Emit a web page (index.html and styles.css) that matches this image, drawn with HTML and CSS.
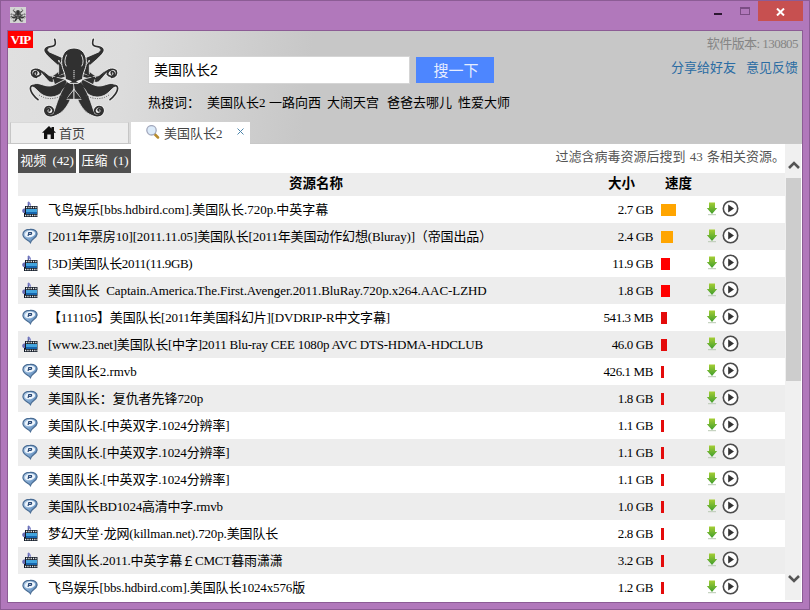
FILE: index.html
```html
<!DOCTYPE html>
<html lang="zh-CN">
<head>
<meta charset="utf-8">
<title>美国队长2</title>
<link rel="stylesheet" href="styles.css">
</head>
<body>
<svg class="defs" width="0" height="0">
  <defs>
    <linearGradient id="green" x1="0" y1="0" x2="0" y2="1"><stop offset="0" stop-color="#a5ce35"/><stop offset="1" stop-color="#3f9d2c"/></linearGradient>
    <linearGradient id="blue" x1="0" y1="0" x2="1" y2="1"><stop offset="0" stop-color="#c4dcf2"/><stop offset="1" stop-color="#4d7fb6"/></linearGradient>
    <g id="arms">
      <path d="M164 118C171 139 160 139 145 141C127 147 138 160 151 168L196 208"/>
      <path d="M109 222C114 214 104 212 101 220C101 231 116 232 122 223C120 208 105 204 96 212C91 222 98 232 110 232"/>
      <path d="M112 209C136 213 135 242 158 236C176 230 178 218 199 214"/>
      <path d="M114 299C89 278 86 258 98 257C112 256 123 281 152 281C183 280 189 258 213 241"/>
      <path d="M147 333C154 329 147 323 141 328C136 337 148 346 158 338C164 326 151 316 139 322C129 333 138 347 153 347C180 345 196 302 218 250"/>
    </g>
    <g id="limbs">
      <path d="M133 150C138 142 146 141 152 142C142 147 142 151 148 156L208 182L194 216C172 190 134 168 133 150Z"/>
      <path d="M122 211C141 214 145 235 160 226C173 219 180 206 205 198L211 234C180 225 176 248 154 247C137 245 139 222 122 211Z"/>
      <path d="M93 258C113 240 126 260 151 258C177 254 187 232 214 228L226 248C195 261 186 290 153 291C118 291 112 262 93 258Z"/>
      <path d="M156 347C168 327 172 288 202 246L224 248C220 294 192 349 156 347Z"/>
      <path d="M156 228L196 238L164 254Z"/>
      <path d="M176 180V226L198 219Z"/>
      <path d="M222 268L198 298H222Z"/>
    </g>
    <g id="octopus">
      <g fill="none" stroke="#eee" stroke-width="10" stroke-linecap="round">
        <use href="#arms"/><use href="#arms" transform="matrix(-1 0 0 1 444 0)"/>
      </g>
      <g fill="#303030" stroke="#eee" stroke-width="2.4">
        <use href="#limbs"/><use href="#limbs" transform="matrix(-1 0 0 1 444 0)"/>
      </g>
      <g fill="none" stroke="#303030" stroke-width="5" stroke-linecap="round">
        <use href="#arms"/><use href="#arms" transform="matrix(-1 0 0 1 444 0)"/>
      </g>
      <path d="M222 144C196 144 183 166 185 190C187 210 196 216 196 239L210 250H234L248 239C248 216 257 210 259 190C261 166 248 144 222 144Z" fill="#303030" stroke="#eee" stroke-width="3"/>
      <path d="M200 164Q190 184 199 199M244 164Q254 184 245 199" fill="none" stroke="#ddd" stroke-width="3"/>
      <path d="M196 236L216 244L207 250L198 244ZM248 236L228 244L237 250L246 244Z" fill="#eee"/>
      <path d="M222 211V236" stroke="#aaa" stroke-width="6" stroke-dasharray="3 3"/>
      <path d="M117 285Q148 306 188 286M327 285Q296 306 256 286" fill="none" stroke="#555" stroke-width="3" stroke-dasharray="3 4"/>
    </g>
    <symbol id="film" viewBox="0 0 16 16">
      <path d="M6.4 1V10" stroke="#5960aa" stroke-width="1.4"/><path d="M6.4 0Q10 3 8.8 6Q8.8 4 6.4 3Z" fill="#8085c8"/><ellipse cx="3.5" cy="9.8" rx="3.3" ry="2.5" fill="#666cb5"/>
      <path d="M3 5H15.5V16H2V12H3Z" fill="#111a26"/><path d="M4 8H15V13H4Z" fill="#42a4dd"/><path d="M4 11H15V13H4Z" fill="#1665ad"/>
      <path d="M4 6.5H15.5M3 14.5H15.5" stroke="#eee" stroke-width="1.3" stroke-dasharray="1.3 1"/>
    </symbol>
    <symbol id="bubble" viewBox="0 0 17 16">
      <path d="M8.5 1C13 .5 16.3 3 16 6C15.7 10 9.5 11 9 15C6.5 12 1 11 1 6.5C1 3 4 1 8.5 1Z" fill="url(#blue)" stroke="#496c94" stroke-width="1.3"/>
      <ellipse cx="8.5" cy="5.9" rx="5.5" ry="3.4" fill="#eef5fc" transform="rotate(-10 8.5 6)"/><path d="M6.5 8L7.2 4.5H10Q10.7 6 9 6.4H7" fill="none" stroke="#294978" stroke-width="1.3"/>
    </symbol>
    <symbol id="down" viewBox="0 0 12 14">
      <path d="M3 .5H9V6H11.2L6 12L.8 6H3Z" fill="url(#green)"/><path d="M2 12.7H10" stroke="#b9c9b3"/>
    </symbol>
    <symbol id="play" viewBox="0 0 17 17">
      <circle cx="8.5" cy="8.5" r="7.2" fill="#fff" stroke="#4b4b4b" stroke-width="1.6"/><path d="M6.2 4.5L12 8.5L6.2 12.5Z" fill="#333"/>
    </symbol>
  </defs>
</svg>
<div class="window">
  <div class="titlebar">
    <svg class="app-icon" width="16" height="16" viewBox="84 108 276 246"><use href="#octopus"/></svg>
    <div class="controls">
      <i class="minimize"></i><i class="maximize"></i>
      <div class="close"><svg width="9" height="8" viewBox="0 0 9 8"><path d="M1 .5L8 7.5M8 .5L1 7.5" stroke="#fff" stroke-width="2"/></svg></div>
    </div>
  </div>
  <div class="client">
    <header>
      <div class="top">
        <span class="vip">VIP</span>
        <svg class="logo" width="92" height="82" viewBox="84 108 276 246"><use href="#octopus"/></svg>
        <div class="search">
          <div class="search-row"><div class="field">美国队长2</div><div class="go">搜一下</div></div>
          <div class="hot"><span class="hot-label">热搜词：</span><span class="h1">美国队长2</span><span class="h2">一路向西</span><span class="h3">大闹天宫</span><span class="h4">爸爸去哪儿</span><span>性爱大师</span></div>
        </div>
        <div class="about"><div class="version">软件版本: 130805</div><div class="links"><span>分享给好友</span><span>意见反馈</span></div></div>
      </div>
      <div class="tabs">
        <div class="tab home"><svg width="14" height="13" viewBox="0 0 14 13"><path d="M7 0L9.5 2.4V1H12V4.8L14 6.8H12V13H8.7V8.5H5.3V13H2V6.8H0Z" fill="#111"/></svg><span>首页</span></div>
        <div class="tab active"><svg width="14" height="14" viewBox="0 0 14 14"><path d="M8.5 9L12 12.5" stroke="#b78b2c" stroke-width="2.5" stroke-linecap="round"/><circle cx="5.5" cy="5.3" r="4.7" fill="#dcebfa" stroke="#a3a9bd" stroke-width="1.3"/></svg><span>美国队长2</span><svg class="tab-close" width="7" height="7" viewBox="0 0 7 7"><path d="M.5 .5L6.5 6.5M6.5 .5L.5 6.5" stroke="#4f86ab"/></svg></div>
      </div>
    </header>
    <main>
      <div class="results">
        <div class="filters"><span class="chip video">视频&nbsp; (42)</span><span class="chip zip">压缩&nbsp; (1)</span><span class="count">过滤含病毒资源后搜到 <b>43</b> 条相关资源。</span></div>
        <div class="row head"><span class="name">资源名称</span><span class="size">大小</span><span class="speed">速度</span></div>
        <div class="row"><svg class="kind"><use href="#film"/></svg><span class="name t0">飞鸟娱乐[bbs.hdbird.com].美国队长.720p.中英字幕</span><span class="size">2.7 GB</span><span class="speed"><i class="bar orange" style="width:15px"></i></span><svg class="down"><use href="#down"/></svg><svg class="play"><use href="#play"/></svg></div>
        <div class="row"><svg class="kind"><use href="#bubble"/></svg><span class="name t2">[2011年票房10][2011.11.05]美国队长[2011年美国动作幻想(Bluray)]（帝国出品）</span><span class="size">2.4 GB</span><span class="speed"><i class="bar orange" style="width:12px"></i></span><svg class="down"><use href="#down"/></svg><svg class="play"><use href="#play"/></svg></div>
        <div class="row"><svg class="kind"><use href="#film"/></svg><span class="name t4">[3D]美国队长2011(11.9GB)</span><span class="size">11.9 GB</span><span class="speed"><i class="bar red" style="width:9px"></i></span><svg class="down"><use href="#down"/></svg><svg class="play"><use href="#play"/></svg></div>
        <div class="row"><svg class="kind"><use href="#film"/></svg><span class="name t1">美国队长&nbsp; Captain.America.The.First.Avenger.2011.BluRay.720p.x264.AAC-LZHD</span><span class="size">1.8 GB</span><span class="speed"><i class="bar red" style="width:9px"></i></span><svg class="down"><use href="#down"/></svg><svg class="play"><use href="#play"/></svg></div>
        <div class="row"><svg class="kind"><use href="#bubble"/></svg><span class="name t3">【111105】美国队长[2011年美国科幻片][DVDRIP-R中文字幕]</span><span class="size">541.3 MB</span><span class="speed"><i class="bar" style="width:6px"></i></span><svg class="down"><use href="#down"/></svg><svg class="play"><use href="#play"/></svg></div>
        <div class="row"><svg class="kind"><use href="#film"/></svg><span class="name t3">[www.23.net]美国队长[中字]2011 Blu-ray CEE 1080p AVC DTS-HDMA-HDCLUB</span><span class="size">46.0 GB</span><span class="speed"><i class="bar" style="width:6px"></i></span><svg class="down"><use href="#down"/></svg><svg class="play"><use href="#play"/></svg></div>
        <div class="row"><svg class="kind"><use href="#bubble"/></svg><span class="name t1">美国队长2.rmvb</span><span class="size">426.1 MB</span><span class="speed"><i class="bar" style="width:3px"></i></span><svg class="down"><use href="#down"/></svg><svg class="play"><use href="#play"/></svg></div>
        <div class="row"><svg class="kind"><use href="#bubble"/></svg><span class="name t1">美国队长：复仇者先锋720p</span><span class="size">1.8 GB</span><span class="speed"><i class="bar" style="width:3px"></i></span><svg class="down"><use href="#down"/></svg><svg class="play"><use href="#play"/></svg></div>
        <div class="row"><svg class="kind"><use href="#bubble"/></svg><span class="name t2">美国队长.[中英双字.1024分辨率]</span><span class="size">1.1 GB</span><span class="speed"><i class="bar" style="width:3px"></i></span><svg class="down"><use href="#down"/></svg><svg class="play"><use href="#play"/></svg></div>
        <div class="row"><svg class="kind"><use href="#bubble"/></svg><span class="name t2">美国队长.[中英双字.1024分辨率]</span><span class="size">1.1 GB</span><span class="speed"><i class="bar" style="width:3px"></i></span><svg class="down"><use href="#down"/></svg><svg class="play"><use href="#play"/></svg></div>
        <div class="row"><svg class="kind"><use href="#bubble"/></svg><span class="name t2">美国队长.[中英双字.1024分辨率]</span><span class="size">1.1 GB</span><span class="speed"><i class="bar" style="width:3px"></i></span><svg class="down"><use href="#down"/></svg><svg class="play"><use href="#play"/></svg></div>
        <div class="row"><svg class="kind"><use href="#bubble"/></svg><span class="name t3">美国队长BD1024高清中字.rmvb</span><span class="size">1.0 GB</span><span class="speed"><i class="bar" style="width:3px"></i></span><svg class="down"><use href="#down"/></svg><svg class="play"><use href="#play"/></svg></div>
        <div class="row"><svg class="kind"><use href="#film"/></svg><span class="name t2">梦幻天堂·龙网(killman.net).720p.美国队长</span><span class="size">2.8 GB</span><span class="speed"><i class="bar" style="width:3px"></i></span><svg class="down"><use href="#down"/></svg><svg class="play"><use href="#play"/></svg></div>
        <div class="row"><svg class="kind"><use href="#film"/></svg><span class="name t2">美国队长.2011.中英字幕￡CMCT暮雨潇潇</span><span class="size">3.2 GB</span><span class="speed"><i class="bar" style="width:3px"></i></span><svg class="down"><use href="#down"/></svg><svg class="play"><use href="#play"/></svg></div>
        <div class="row"><svg class="kind"><use href="#bubble"/></svg><span class="name t2">飞鸟娱乐[bbs.hdbird.com].美国队长1024x576版</span><span class="size">1.2 GB</span><span class="speed"><i class="bar" style="width:3px"></i></span><svg class="down"><use href="#down"/></svg><svg class="play"><use href="#play"/></svg></div>
      </div>
      <div class="scrollbar">
        <svg width="12" height="10" viewBox="0 0 12 10"><path d="M1 8L6 3L11 8" fill="none" stroke="#555" stroke-width="2.6"/></svg>
        <div class="thumb"></div>
        <svg class="scroll-down" width="12" height="10" viewBox="0 0 12 10"><path d="M1 2L6 7L11 2" fill="none" stroke="#555" stroke-width="2.6"/></svg>
      </div>
    </main>
  </div>
</div>
</body>
</html>
```
FILE: styles.css
```css
* { box-sizing: border-box; }
body { margin: 0; font-family: "Liberation Serif", "Noto Sans CJK SC", serif; font-size: 13px; color: #000; overflow: hidden; }
svg { display: block; flex: none; }
.defs { position: absolute; }
.window { width: 810px; height: 610px; background: #b178bb; border: 1px solid #8c5c95; padding: 0 6px 6px; display: flex; flex-direction: column; white-space: nowrap; }
.titlebar { height: 29px; flex: none; display: flex; justify-content: space-between; padding: 0 0 0 3px; }
.app-icon { margin-top: 6px; background: #d4d4d4; }
.controls { display: flex; }
.minimize { width: 8px; height: 2px; background: #2c1731; margin: 12px 18px 0 0; }
.maximize { width: 10px; height: 8px; border: 1px solid #7b4d84; border-top-width: 2px; margin: 6px 8px 0 0; }
.close { width: 45px; height: 20px; background: #c75050; display: flex; align-items: center; justify-content: center; padding-top: 2px; }
.client { flex: 1; min-height: 0; border: 1px solid #8c5c95; background: #fff; display: flex; flex-direction: column; }
header { height: 113px; flex: none; background: linear-gradient(97deg, #e0e0e0 0, #dcdcdc 15%, #c7c7c7 38%, #c7c7c7 100%); border-bottom: 1px solid #c8c8c8; display: flex; flex-direction: column; }
.top { height: 91px; flex: none; display: flex; align-items: flex-start; }
.vip { width: 25px; height: 17px; background: #f00; color: #fff; font-size: 13px; line-height: 17px; font-weight: bold; text-align: center; letter-spacing: -.8px; }
.logo { margin: 5px 0 0 -5px; }
.search { margin: 25px 0 0 28px; }
.search-row { display: flex; gap: 6px; }
.field { width: 262px; height: 28px; border: 1px solid #d5d5d5; background: #fff; font: 14px/26px "Liberation Sans", "Noto Sans CJK SC", sans-serif; padding-left: 5px; }
.go { width: 78px; height: 26px; margin-top: 1px; background: #4d86ff; color: #e6edff; font-size: 15px; line-height: 28px; text-align: center; padding-left: 2px; }
.hot { display: flex; margin-top: 9px; line-height: 20px; }
.hot-label { width: 59px; }
.h1 { width: 62px; }
.h2 { width: 58px; }
.h3 { width: 60px; }
.h4 { width: 71px; }
.about { margin: 4px 4px 0 auto; text-align: right; }
.version { color: #858585; line-height: 18px; letter-spacing: -.55px; }
.links { display: flex; justify-content: flex-end; gap: 10px; margin-top: 5px; line-height: 20px; color: #2b6ca3; }
.tabs { display: flex; padding-left: 2px; gap: 2px; height: 21px; }
.tab { display: flex; align-items: center; height: 22px; color: #444; border: 1px solid #c6c6c6; }
.home { width: 119px; background: #ededed; padding-left: 31px; gap: 3px; border-top-color: #d8d8d8; }
.tab span { margin-top: -2px; }
.active { width: 119px; background: #fff; border: 0; padding-left: 15px; }
.tab > svg:first-child { margin-top: -2px; }
.active span { margin-left: 4px; width: 76px; }
.active .tab-close { margin-top: -3px; margin-left: -3px; }
main { flex: 1; min-height: 0; display: flex; }
.results { width: 777px; padding: 5px 0 0 10px; }
.filters { height: 24px; display: flex; gap: 3px; }
.chip { height: 24px; background: #505050; color: #fff; line-height: 24px; text-align: center; letter-spacing: -.1px; }
.video { width: 58px; }
.zip { width: 52px; }
.count { margin: -2px 0 0 auto; line-height: 20px; color: #555; }
.count b { font-weight: normal; margin: 0 1px; }
.row { height: 27px; display: flex; align-items: center; line-height: 20px; }
.row:nth-child(odd) { background: #fff; }
.row:nth-child(even) { background: #ededed; }
.row.head { height: 23px; font-weight: bold; font-size: 13.5px; }
.kind { width: 16px; height: 16px; margin: -2px 10px 0 4px; }
.name { width: 537px; margin-top: 1px; }
.t0 { letter-spacing: -.03px; }
.t1 { letter-spacing: -.06px; }
.t2 { letter-spacing: -.14px; }
.t3 { letter-spacing: -.21px; }
.t4 { letter-spacing: -.34px; }
.size { width: 68px; margin-top: 1px; text-align: right; letter-spacing: -.4px; }
.speed { width: 53px; padding-left: 8px; }
.bar { display: block; background: #e40b0b; height: 12px; margin-top: 1px; }
.bar.red { background: #f00; }
.bar.orange { background: #ffa500; }
.down { width: 12px; height: 14px; margin-top: -1px; }
.play { width: 17px; height: 17px; margin: -2px 0 0 4px; }
.head .name { width: 567px; padding-left: 271px; margin-top: -2px; }
.head .size { width: 50px; margin-top: -2px; letter-spacing: 0; }
.head .speed { padding-left: 30px; margin-top: -2px; }
.scrollbar { width: 16px; height: 456px; background: #f0f0f0; padding: 16px 0 0 1px; display: flex; flex-direction: column; }
.scrollbar svg { margin-left: 2px; }
.thumb { height: 203px; margin-top: 8px; background: #cdcdcd; }
.scroll-down { margin-top: auto; margin-bottom: 16px; }
```
